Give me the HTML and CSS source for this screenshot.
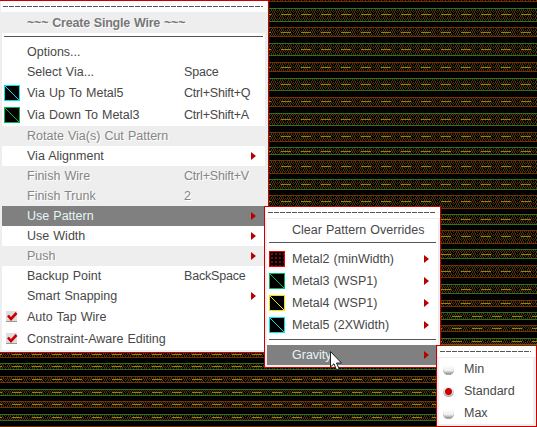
FILE: index.html
```
<!DOCTYPE html>
<html lang="en">
<head>
<meta charset="utf-8">
<title>Create Single Wire</title>
<link rel="stylesheet" href="styles.css">
</head>
<body>
<svg class="layout" id="layout" width="537" height="427" shape-rendering="crispEdges">
  <defs>
    <pattern id="mesh" width="8" height="4" patternUnits="userSpaceOnUse">
      <path fill="#742000" d="M0 0h1v1h-1zM1 1h1v2h-1zM3 2h1v1h-1zM5 0h1v1h-1zM6 3h1v1h-1zM4 3h1v1h-1z"/>
      <path fill="#284a10" d="M2 0h1v1h-1zM3 1h1v1h-1zM5 2h1v1h-1zM7 1h1v1h-1zM0 3h1v1h-1zM2 3h1v1h-1zM7 2h1v1h-1z"/>
    </pattern>
  </defs>
</svg>

<div class="menu main">
  <div class="tear"></div>
  <div class="title">~~~ Create Single Wire ~~~</div>
  <div class="rule"></div>
  <div class="row"><span class="label">Options...</span></div>
  <div class="row"><span class="label">Select Via...</span><span class="key">Space</span></div>
  <div class="row tall"><b class="swatch cyan"></b><span class="label">Via Up To Metal5</span><span class="key">Ctrl+Shift+Q</span></div>
  <div class="row tall"><b class="swatch green"></b><span class="label">Via Down To Metal3</span><span class="key">Ctrl+Shift+A</span></div>
  <div class="row off"><span class="label">Rotate Via(s) Cut Pattern</span></div>
  <div class="row more"><span class="label">Via Alignment</span></div>
  <div class="row off"><span class="label">Finish Wire</span><span class="key">Ctrl+Shift+V</span></div>
  <div class="row off"><span class="label">Finish Trunk</span><span class="key">2</span></div>
  <div class="row on more"><span class="label">Use Pattern</span></div>
  <div class="row more"><span class="label">Use Width</span></div>
  <div class="row off more"><span class="label">Push</span></div>
  <div class="row"><span class="label">Backup Point</span><span class="key">BackSpace</span></div>
  <div class="row more"><span class="label">Smart Snapping</span></div>
  <div class="row tall"><svg class="check" width="12" height="12"><path fill="#ddd" d="M0 0h11v11h-11z"/><path fill="#999" d="M0 10h11v1h-11z"/><path fill="none" stroke="#c80000" stroke-width="2.6" d="M2 4.5l3 3.5 5.5-6"/></svg><span class="label">Auto Tap Wire</span></div>
  <div class="row tall"><svg class="check" width="12" height="12"><path fill="#ddd" d="M0 0h11v11h-11z"/><path fill="#999" d="M0 10h11v1h-11z"/><path fill="none" stroke="#c80000" stroke-width="2.6" d="M2 4.5l3 3.5 5.5-6"/></svg><span class="label">Constraint-Aware Editing</span></div>
</div>

<div class="menu pattern">
  <div class="tear"></div>
  <div class="row first"><span class="label">Clear Pattern Overrides</span></div>
  <div class="rule"></div>
  <div class="row tall more"><b class="swatch red"></b><span class="label">Metal2 (minWidth)</span></div>
  <div class="row tall more"><b class="swatch green"></b><span class="label">Metal3 (WSP1)</span></div>
  <div class="row tall more"><b class="swatch yellow"></b><span class="label">Metal4 (WSP1)</span></div>
  <div class="row tall more"><b class="swatch cyan"></b><span class="label">Metal5 (2XWidth)</span></div>
  <div class="rule low"></div>
  <div class="row on more"><span class="label">Gravity</span></div>
</div>

<div class="menu gravity">
  <div class="tear"></div>
  <div class="row tall"><b class="radio"></b><span class="label">Min</span></div>
  <div class="row tall"><b class="radio picked"></b><span class="label">Standard</span></div>
  <div class="row tall"><b class="radio"></b><span class="label">Max</span></div>
</div>

<svg class="cursor" width="13" height="20"><path fill="#fff" stroke="#222" d="M.5.5v15.5l3.4-3.2 2.6 6 2.6-1.1-2.6-5.7h5z"/></svg>
<script src="layout.js"></script>
</body>
</html>
```
FILE: styles.css
```
body { margin: 0; width: 537px; height: 427px; overflow: hidden; position: relative; background: #000; font: 12.5px/20px "Liberation Sans", Arial, sans-serif; letter-spacing: 0; word-spacing: .6px; color: #484848; }
.layout { display: block; }
.menu { position: absolute; box-sizing: border-box; border: 1px solid #c80000; background: #eee; white-space: nowrap; }
.main { left: -1px; top: 0; width: 270px; height: 353px; padding: 0 3px 0 2px; }
.pattern { left: 264px; top: 206px; width: 177px; height: 162px; padding: 0 2px; }
.gravity { left: 436px; top: 345px; width: 101px; height: 82px; padding: 0 3px 0 2px; }
.tear { height: 11px; margin: 0 -2px 0 -1px; background: #fff repeating-linear-gradient(90deg, #555 0 5px, #fff 5px 6px) no-repeat 2px 5px / calc(100% - 6px) 1px; }
.title { height: 21px; line-height: 22px; padding-left: 25px; font-weight: bold; letter-spacing: -.2px; color: #777; text-shadow: 1px 1px #fff; }
.rule { height: 9px; background: linear-gradient(#555, #555) no-repeat 2px 3px / calc(100% - 4px) 1px #fff; }
.row { display: flex; align-items: center; position: relative; height: 20px; padding-left: 25px; background: #fff; }
.tall { height: 22px; }
.off { color: #858585; background: #eee; text-shadow: 1px 1px #fff; }
.on { color: #e4f6f6; background: #808080; }
.label { flex: 1; }
.key { width: 81px; letter-spacing: -.2px; }
.more::after { content: ""; width: 0; height: 0; margin-right: 9px; border-left: 5px solid #b80000; border-top: 4px solid transparent; border-bottom: 4px solid transparent; }
.swatch { box-sizing: border-box; width: 16px; height: 16px; margin: 0 7px 0 -23px; border: 1px solid; background: linear-gradient(to top right, #000 47%, currentColor 47% 53%, #000 53%); }
/* The slash on each layer swatch runs from top left to bottom right. */
.swatch { background: linear-gradient(to top right, #000 47%, currentColor 47% 53%, #000 53%); }
.cyan { color: #00e5ee; }
.green { color: #00b85c; }
.yellow { color: #eee800; }
.swatch.red { color: #f00000; background: #000 radial-gradient(circle, #c00000 .6px, transparent 1px) 0 0 / 4px 4px; }
.check { margin: 0 9px 0 -21px; }
.first { margin-top: 1px; height: 21px; }
.pattern .first + .rule { height: 8px; background-position: 2px 2px; }
.gravity .row:nth-child(2) { margin-top: 1px; }
.radio { width: 11px; height: 11px; margin: 0 10px 0 -21px; border-radius: 50%; background: linear-gradient(#fff 10%, #eee 60%, #777); box-shadow: inset 0 -1px #aaa; }
.picked { background: radial-gradient(circle, #c80000 3px, transparent 4px), linear-gradient(#fff, #bbb); }
.cursor { position: absolute; left: 330px; top: 351px; }
```
FILE: layout.js
```
// Each routing track: top edge, bottom edge, centre line.
const tracks = [[-11,1,-5],[8,21,14],[27,36,32],[43,55,49],[62,71,67],[78,90,84],[97,106,101],[113,125,119],[132,141,136],[147,154,151],[160,173,166],[179,189,184],[195,208,201],[214,224,219],[230,243,236],[249,258,254],[265,277,271],[284,293,289],[300,306,303],[312,319,316],[325,331,328],[338,344,341],[351,357,354],[363,369,366],[376,382,379],[389,395,392],[401,407,404],[414,420,417],[426,432,429]];
const svg = document.getElementById("layout");
function rect(x, y, w, h, fill) {
  const r = document.createElementNS("http://www.w3.org/2000/svg", "rect");
  for (const [k, v] of Object.entries({ x, y, width: w, height: h, fill })) r.setAttribute(k, v);
  svg.appendChild(r);
}
tracks.forEach(([top, bottom, mid], i) => {
  const edge = i % 2 ? "#30701c" : "#743000";
  rect(0, top, 537, bottom - top + 1, "url(#mesh)");
  rect(0, top, 537, 1, edge);
  rect(0, bottom, 537, 1, edge);
  for (let x = top < 310 ? 1 : -8; x < 537; x += 20) rect(x, mid, 10, 1, "#958400");
});
```
